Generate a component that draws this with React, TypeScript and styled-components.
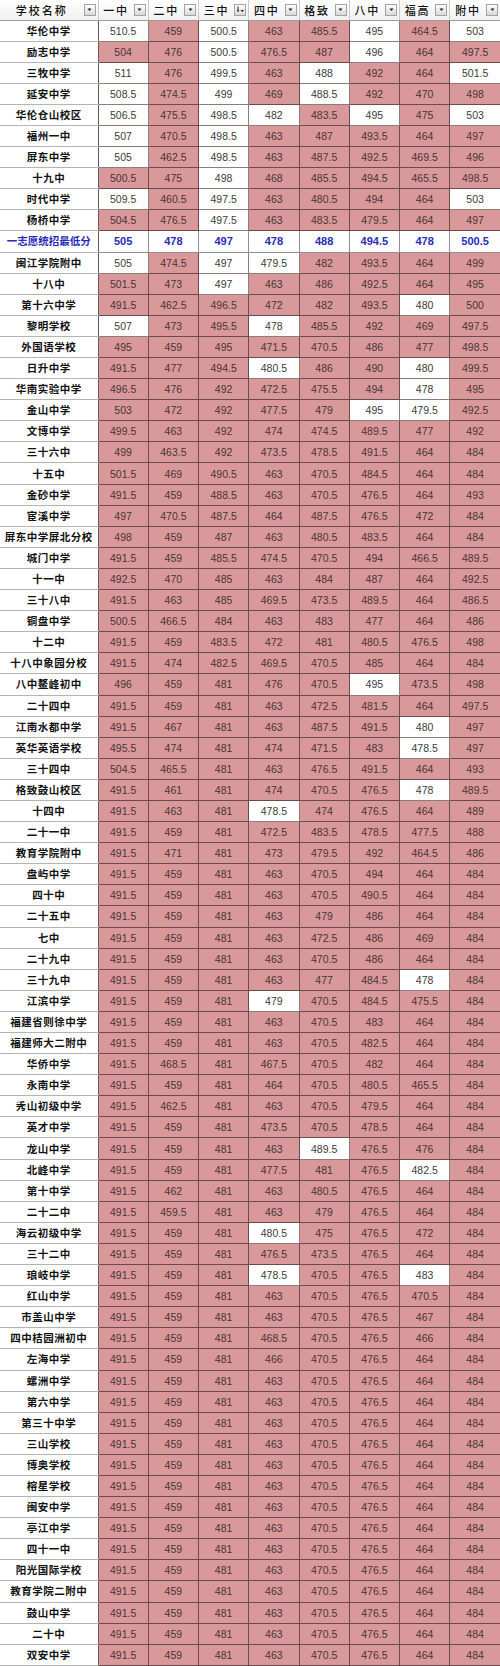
import React from "react";
import styled, { createGlobalStyle } from "styled-components";

const GlobalStyle = createGlobalStyle`
  html, body {
    margin: 0;
    padding: 0;
    background: #ffffff;
  }
  body {
    font-family: "Liberation Sans", "Noto Sans CJK SC", sans-serif;
  }
`;

const COLUMNS = ["一中", "二中", "三中", "四中", "格致", "八中", "福高", "附中"];

// 一志愿统招最低分: cells at or above this line are left white
const MIN_LINE = [505, 478, 497, 478, 488, 494.5, 478, 500.5];

type Row = [string, ...number[]];

const TOP_ROWS: Row[] = [
  ["华伦中学", 510.5, 459, 500.5, 463, 485.5, 495, 464.5, 503],
  ["励志中学", 504, 476, 500.5, 476.5, 487, 496, 464, 497.5],
  ["三牧中学", 511, 476, 499.5, 463, 488, 492, 464, 501.5],
  ["延安中学", 508.5, 474.5, 499, 469, 488.5, 492, 470, 498],
  ["华伦仓山校区", 506.5, 475.5, 498.5, 482, 483.5, 495, 475, 503],
  ["福州一中", 507, 470.5, 498.5, 463, 487, 493.5, 464, 497],
  ["屏东中学", 505, 462.5, 498.5, 463, 487.5, 492.5, 469.5, 496],
  ["十九中", 500.5, 475, 498, 468, 485.5, 494.5, 465.5, 498.5],
  ["时代中学", 509.5, 460.5, 497.5, 463, 480.5, 494, 464, 503],
  ["杨桥中学", 504.5, 476.5, 497.5, 463, 483.5, 479.5, 464, 497],
];

const REST_ROWS: Row[] = [
  ["闽江学院附中", 505, 474.5, 497, 479.5, 482, 493.5, 464, 499],
  ["十八中", 501.5, 473, 497, 463, 486, 492.5, 464, 495],
  ["第十六中学", 491.5, 462.5, 496.5, 472, 482, 493.5, 480, 500],
  ["黎明学校", 507, 473, 495.5, 478, 485.5, 492, 469, 497.5],
  ["外国语学校", 495, 459, 495, 471.5, 470.5, 486, 477, 498.5],
  ["日升中学", 491.5, 477, 494.5, 480.5, 486, 490, 480, 499.5],
  ["华南实验中学", 496.5, 476, 492, 472.5, 475.5, 494, 478, 495],
  ["金山中学", 503, 472, 492, 477.5, 479, 495, 479.5, 492.5],
  ["文博中学", 499.5, 463, 492, 474, 474.5, 489.5, 477, 492],
  ["三十六中", 499, 463.5, 492, 473.5, 478.5, 491.5, 464, 484],
  ["十五中", 501.5, 469, 490.5, 463, 470.5, 484.5, 464, 484],
  ["金砂中学", 491.5, 459, 488.5, 463, 470.5, 476.5, 464, 493],
  ["宦溪中学", 497, 470.5, 487.5, 464, 487.5, 476.5, 472, 484],
  ["屏东中学屏北分校", 498, 459, 487, 463, 480.5, 483.5, 464, 484],
  ["城门中学", 491.5, 459, 485.5, 474.5, 470.5, 494, 466.5, 489.5],
  ["十一中", 492.5, 470, 485, 463, 484, 487, 464, 492.5],
  ["三十八中", 491.5, 463, 485, 469.5, 473.5, 489.5, 464, 486.5],
  ["铜盘中学", 500.5, 466.5, 484, 463, 483, 477, 464, 486],
  ["十二中", 491.5, 459, 483.5, 472, 481, 480.5, 476.5, 498],
  ["十八中象园分校", 491.5, 474, 482.5, 469.5, 470.5, 485, 464, 484],
  ["八中鳌峰初中", 496, 459, 481, 476, 470.5, 495, 473.5, 498],
  ["二十四中", 491.5, 459, 481, 463, 472.5, 481.5, 464, 497.5],
  ["江南水都中学", 491.5, 467, 481, 463, 487.5, 491.5, 480, 497],
  ["英华英语学校", 495.5, 474, 481, 474, 471.5, 483, 478.5, 497],
  ["三十四中", 504.5, 465.5, 481, 463, 476.5, 491.5, 464, 493],
  ["格致鼓山校区", 491.5, 461, 481, 474, 470.5, 476.5, 478, 489.5],
  ["十四中", 491.5, 463, 481, 478.5, 474, 476.5, 464, 489],
  ["二十一中", 491.5, 459, 481, 472.5, 483.5, 478.5, 477.5, 488],
  ["教育学院附中", 491.5, 471, 481, 473, 479.5, 492, 464.5, 486],
  ["盘屿中学", 491.5, 459, 481, 463, 470.5, 494, 464, 484],
  ["四十中", 491.5, 459, 481, 463, 470.5, 490.5, 464, 484],
  ["二十五中", 491.5, 459, 481, 463, 479, 486, 464, 484],
  ["七中", 491.5, 459, 481, 463, 472.5, 486, 469, 484],
  ["二十九中", 491.5, 459, 481, 463, 470.5, 486, 464, 484],
  ["三十九中", 491.5, 459, 481, 463, 477, 484.5, 478, 484],
  ["江滨中学", 491.5, 459, 481, 479, 470.5, 484.5, 475.5, 484],
  ["福建省则徐中学", 491.5, 459, 481, 463, 470.5, 483, 464, 484],
  ["福建师大二附中", 491.5, 459, 481, 463, 470.5, 482.5, 464, 484],
  ["华侨中学", 491.5, 468.5, 481, 467.5, 470.5, 482, 464, 484],
  ["永南中学", 491.5, 459, 481, 464, 470.5, 480.5, 465.5, 484],
  ["秀山初级中学", 491.5, 462.5, 481, 463, 470.5, 479.5, 464, 484],
  ["英才中学", 491.5, 459, 481, 473.5, 470.5, 478.5, 464, 484],
  ["龙山中学", 491.5, 459, 481, 463, 489.5, 476.5, 476, 484],
  ["北峰中学", 491.5, 459, 481, 477.5, 481, 476.5, 482.5, 484],
  ["第十中学", 491.5, 462, 481, 463, 480.5, 476.5, 464, 484],
  ["二十二中", 491.5, 459.5, 481, 463, 479, 476.5, 464, 484],
  ["海云初级中学", 491.5, 459, 481, 480.5, 475, 476.5, 472, 484],
  ["三十二中", 491.5, 459, 481, 476.5, 473.5, 476.5, 464, 484],
  ["琅岐中学", 491.5, 459, 481, 478.5, 470.5, 476.5, 483, 484],
  ["红山中学", 491.5, 459, 481, 463, 470.5, 476.5, 470.5, 484],
  ["市盖山中学", 491.5, 459, 481, 463, 470.5, 476.5, 467, 484],
  ["四中桔园洲初中", 491.5, 459, 481, 468.5, 470.5, 476.5, 466, 484],
  ["左海中学", 491.5, 459, 481, 466, 470.5, 476.5, 464, 484],
  ["螺洲中学", 491.5, 459, 481, 463, 470.5, 476.5, 464, 484],
  ["第六中学", 491.5, 459, 481, 463, 470.5, 476.5, 464, 484],
  ["第三十中学", 491.5, 459, 481, 463, 470.5, 476.5, 464, 484],
  ["三山学校", 491.5, 459, 481, 463, 470.5, 476.5, 464, 484],
  ["博奥学校", 491.5, 459, 481, 463, 470.5, 476.5, 464, 484],
  ["榕星学校", 491.5, 459, 481, 463, 470.5, 476.5, 464, 484],
  ["闽安中学", 491.5, 459, 481, 463, 470.5, 476.5, 464, 484],
  ["亭江中学", 491.5, 459, 481, 463, 470.5, 476.5, 464, 484],
  ["四十一中", 491.5, 459, 481, 463, 470.5, 476.5, 464, 484],
  ["阳光国际学校", 491.5, 459, 481, 463, 470.5, 476.5, 464, 484],
  ["教育学院二附中", 491.5, 459, 481, 463, 470.5, 476.5, 464, 484],
  ["鼓山中学", 491.5, 459, 481, 463, 470.5, 476.5, 464, 484],
  ["二十中", 491.5, 459, 481, 463, 470.5, 476.5, 464, 484],
  ["双安中学", 491.5, 459, 481, 463, 470.5, 476.5, 464, 484],
];

// the sheet leaves 十九中 / 八中 shaded even though it ties the line
const isPassing = (school: string, col: number, score: number) =>
  !(school === "十九中" && col === 5) && score >= MIN_LINE[col];

const fmt = (n: number) => (Number.isInteger(n) ? String(n) : n.toFixed(1));

function FilterButton({ sorted }: { sorted?: boolean }) {
  return (
    <FilterBox>
      <svg width="9" height="9" viewBox="0 0 9 9">
        {sorted ? (
          <>
            <path d="M2 1.5 V6.5" stroke="#222" strokeWidth="1" />
            <path d="M0.8 5.2 L2 7 L3.2 5.2 Z" fill="#222" />
            <path d="M4.5 5 L8 5 L6.25 7 Z" fill="#222" />
          </>
        ) : (
          <path d="M2.5 3.5 L6.5 3.5 L4.5 6 Z" fill="#222" />
        )}
      </svg>
    </FilterBox>
  );
}

function ScoreRow({ row }: { row: Row }) {
  const [school, ...scores] = row;
  return (
    <tr>
      <NameCell>{school}</NameCell>
      {scores.map((s, i) => (
        <ScoreCell key={i} $pass={isPassing(school, i, s)}>
          {fmt(s)}
        </ScoreCell>
      ))}
    </tr>
  );
}

export default function App() {
  return (
    <>
      <GlobalStyle />
      <Sheet>
        <colgroup>
          <col style={{ width: 98 }} />
          {COLUMNS.map((c) => (
            <col key={c} />
          ))}
        </colgroup>
        <thead>
          <HeaderRow>
            <HeaderCell>
              <HeaderInner>
                <HeaderLabel>学校名称</HeaderLabel>
                <FilterButton />
              </HeaderInner>
            </HeaderCell>
            {COLUMNS.map((c) => (
              <HeaderCell key={c}>
                <HeaderInner>
                  <HeaderLabel>{c}</HeaderLabel>
                  <FilterButton sorted={c === "三中"} />
                </HeaderInner>
              </HeaderCell>
            ))}
          </HeaderRow>
        </thead>
        <tbody>
          {TOP_ROWS.map((r) => (
            <ScoreRow key={r[0]} row={r} />
          ))}
          <tr>
            <LineNameCell>一志愿统招最低分</LineNameCell>
            {MIN_LINE.map((m, i) => (
              <LineCell key={i}>{fmt(m)}</LineCell>
            ))}
          </tr>
          {REST_ROWS.map((r) => (
            <ScoreRow key={r[0]} row={r} />
          ))}
        </tbody>
      </Sheet>
    </>
  );
}

const Sheet = styled.table`
  width: 500px;
  height: 1666px;
  table-layout: fixed;
  border-collapse: collapse;
  border-spacing: 0;

  tr {
    height: 21px;
  }
`;

const HeaderRow = styled.tr`
  && {
    height: 20px;
  }
`;

const HeaderCell = styled.th`
  padding: 0 2px 0 0;
  background: linear-gradient(#ffffff, #f0f0f0);
  border-right: 1px solid #c9c9c9;
  border-bottom: 1px solid #9c9c9c;
  font-family: "Noto Sans CJK SC", sans-serif;
  font-weight: 500;
  font-size: 11px;
  line-height: 12px;
  color: #111;
  &:last-child {
    border-right: none;
  }
`;

const HeaderInner = styled.div`
  display: flex;
  align-items: center;
  justify-content: space-between;
`;

const HeaderLabel = styled.span`
  flex: 1;
  text-align: center;
  letter-spacing: 2px;
`;

const FilterBox = styled.span`
  display: flex;
  align-items: center;
  justify-content: center;
  width: 10px;
  height: 10px;
  border: 1px solid #a3a3a3;
  background: linear-gradient(#fdfdfd, #d9d9d9);
  flex: none;
`;

const NameCell = styled.td`
  padding: 0;
  background: #ffffff;
  border-bottom: 1px solid #b4b4b4;
  border-right: 1px solid #6a5858;
  text-align: center;
  font-family: "Noto Sans CJK SC", sans-serif;
  font-weight: 700;
  font-size: 10.5px;
  line-height: 12px;
  letter-spacing: 0.5px;
  color: #111;
  white-space: nowrap;
  overflow: hidden;
`;

const ScoreCell = styled.td<{ $pass: boolean }>`
  padding: 0;
  text-align: center;
  font-size: 10.5px;
  line-height: 12px;
  color: ${({ $pass }) => ($pass ? "#3c3c3c" : "#4a3434")};
  background: ${({ $pass }) => ($pass ? "#ffffff" : "#d9999b")};
  border: 1px solid ${({ $pass }) => ($pass ? "#8c7c7c" : "#6b4c4e")};
  &:last-child {
    border-right: none;
  }
`;

const LineNameCell = styled(NameCell)`
  color: #2b2bb8;
  letter-spacing: 0;
`;

const LineCell = styled.td`
  padding: 0;
  text-align: center;
  background: #ffffff;
  color: #2b2bb8;
  font-weight: 700;
  font-size: 11px;
  line-height: 12px;
  border: 1px solid #9a8c8c;
  &:last-child {
    border-right: none;
  }
`;
